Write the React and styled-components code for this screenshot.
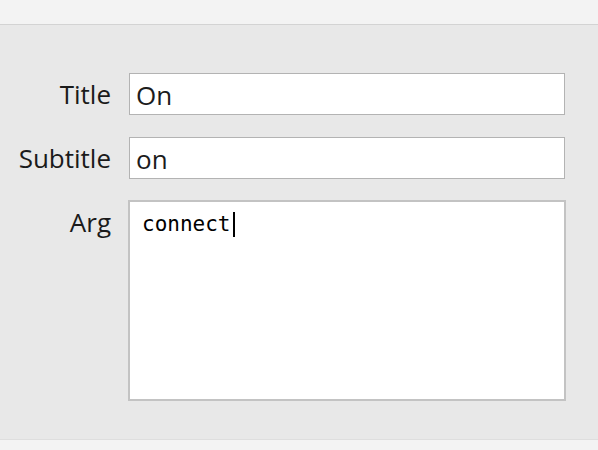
import React from "react";
import styled, { createGlobalStyle } from "styled-components";

const Global = createGlobalStyle`
  html, body { margin: 0; padding: 0; }
  body { width: 598px; height: 450px; overflow: hidden; background: #e8e8e8; }
  #root { height: 450px; }
`;

const Window = styled.div`
  display: flex;
  flex-direction: column;
  height: 450px;
  width: 598px;
  background: #e8e8e8;
`;

const TopBar = styled.div`
  height: 24px;
  background: #f3f3f3;
  border-bottom: 1px solid #d3d3d3;
  flex: none;
`;

const Panel = styled.div`
  flex: 1;
  padding-top: 48px;
  box-sizing: border-box;
`;

const BottomBar = styled.div`
  height: 10px;
  background: #f3f3f3;
  border-top: 1px solid #dedede;
  flex: none;
`;

const Form = styled.div`
  display: grid;
  grid-template-columns: 111px 436px;
  column-gap: 18px;
  row-gap: 22px;
`;

const Label = styled.label`
  font-family: "Open Sans", "Liberation Sans", sans-serif;
  font-size: 26px;
  line-height: ${(p) => p.$lh || 42}px;
  color: #1a1a1a;
  text-align: right;
  align-self: start;
  margin-top: ${(p) => p.$mt || 0}px;
`;

const TextField = styled.input`
  box-sizing: border-box;
  width: 436px;
  height: 42px;
  margin: 0;
  border: 1px solid #b3b3b3;
  background: #fff;
  padding: 1px 6px 0;
  font-family: "Open Sans", "Liberation Sans", sans-serif;
  font-size: 26px;
  color: #1c1c1c;
  outline: none;
`;

const Area = styled.div`
  box-sizing: border-box;
  width: 438px;
  height: 201px;
  margin-left: -1px;
  margin-top: -1px;
  border: 2px solid #c3c3c3;
  background: #fff;
  padding: 10px 0 0 12px;
  font-family: "DejaVu Sans Mono", "Liberation Mono", monospace;
  font-size: 21px;
  color: #000;
  display: flex;
  align-items: flex-start;
`;

const Caret = styled.span`
  display: inline-block;
  width: 2px;
  height: 25px;
  background: #000;
  margin-left: 2px;
  margin-top: 0px;
`;

export default function App() {
  return (
    <>
      <Global />
      <Window>
        <TopBar />
        <Panel>
          <Form>
            <Label>Title</Label>
            <TextField readOnly value="On" />
            <Label>Subtitle</Label>
            <TextField readOnly value="on" />
            <Label $mt={0}>Arg</Label>
            <Area>
              <span>connect</span>
              <Caret />
            </Area>
          </Form>
        </Panel>
        <BottomBar />
      </Window>
    </>
  );
}
